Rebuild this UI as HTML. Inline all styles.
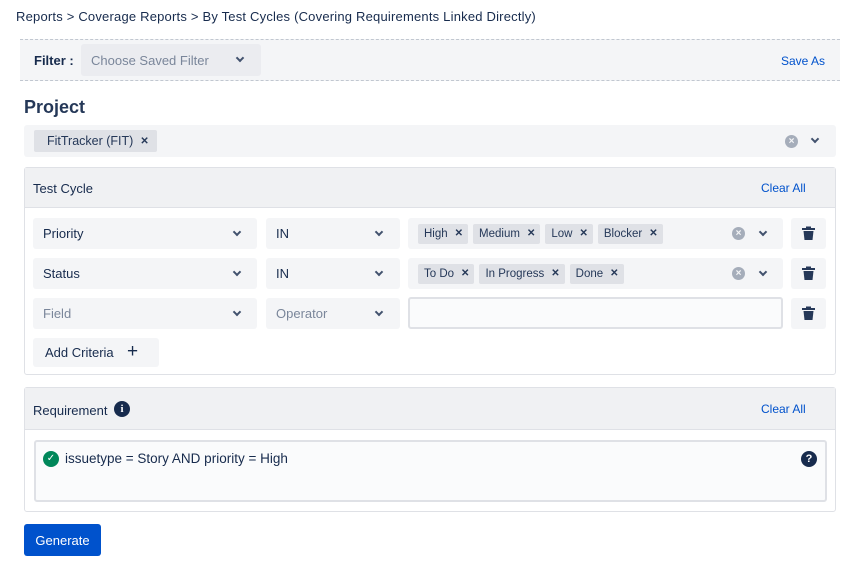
<!DOCTYPE html><html><head><style>
*{box-sizing:border-box;margin:0;padding:0}
body{width:843px;height:573px;background:#fff;font-family:"Liberation Sans",sans-serif;font-size:13px;color:#172b4d;position:relative;overflow:hidden}
.a{position:absolute}
.sel{position:absolute;background:#f4f5f7;border-radius:3px;display:flex;align-items:center}
.chev{position:absolute;width:6px;height:6px;border-right:2px solid #42526e;border-bottom:2px solid #42526e;transform:rotate(45deg)}
.tag{background:#dfe1e6;border-radius:2px;height:20px;padding:0 5px 0 6px;display:flex;align-items:center;font-size:11.5px;color:#253858;margin-right:5px}
.tag b{margin-left:7px;font-size:10px}
.clr{position:absolute;width:13px;height:13px;border-radius:50%;background:#a5adba;color:#f4f5f7;font-size:10px;line-height:13px;text-align:center;font-weight:bold}
.trash{position:absolute;width:35px;height:31px;background:#f4f5f7;border-radius:3px}
.link{position:absolute;color:#0052cc;font-size:12px}
</style></head><body>
<div class="a" style="left:16px;top:9px;font-size:13px;letter-spacing:0.2px">Reports &gt; Coverage Reports &gt; By Test Cycles (Covering Requirements Linked Directly)</div>
<div class="a" style="left:20px;top:39px;width:820px;height:42px;background:#f4f5f7;border-top:1px dashed #c1c7d0;border-bottom:1px dashed #c1c7d0"></div>
<div class="a" style="left:34px;top:53px;font-weight:bold;font-size:13px">Filter :</div>
<div class="sel" style="left:81px;top:44px;width:180px;height:32px;background:#ebecf0;color:#7a869a;padding-left:10px">Choose Saved Filter<div class="chev" style="left:156px;top:11px"></div></div>
<div class="link" style="left:781px;top:54px">Save As</div>
<div class="a" style="left:24px;top:97px;font-size:18px;font-weight:bold;color:#253858">Project</div>
<div class="sel" style="left:24px;top:125px;width:812px;height:32px;padding-left:10px"><div class="tag" style="height:22px;font-size:12.5px;padding:0 8px 0 13px">FitTracker (FIT)<b>✕</b></div><div class="clr" style="left:761px;top:10px">×</div><div class="chev" style="left:788px;top:11px"></div></div>
<div class="a" style="left:24px;top:167px;width:812px;height:208px;border:1px solid #dfe1e6;border-radius:3px"></div>
<div class="a" style="left:25px;top:168px;width:810px;height:40px;background:#f0f1f3;border-bottom:1px solid #dfe1e6"></div>
<div class="a" style="left:33px;top:181px">Test Cycle</div>
<div class="link" style="left:761px;top:181px">Clear All</div>

<div class="sel" style="left:33px;top:218px;width:224px;height:31px;padding-left:10px">Priority<div class="chev" style="left:201px;top:11px"></div></div>
<div class="sel" style="left:266px;top:218px;width:134px;height:31px;padding-left:10px">IN<div class="chev" style="left:110px;top:11px"></div></div>
<div class="sel" style="left:408px;top:218px;width:375px;height:31px;padding-left:10px"><div class="tag">High<b>✕</b></div><div class="tag">Medium<b>✕</b></div><div class="tag">Low<b>✕</b></div><div class="tag">Blocker<b>✕</b></div><div class="clr" style="left:324px;top:9px">×</div><div class="chev" style="left:352px;top:11px"></div></div>
<div class="trash" style="left:791px;top:218px"></div>

<div class="sel" style="left:33px;top:258px;width:224px;height:31px;padding-left:10px">Status<div class="chev" style="left:201px;top:11px"></div></div>
<div class="sel" style="left:266px;top:258px;width:134px;height:31px;padding-left:10px">IN<div class="chev" style="left:110px;top:11px"></div></div>
<div class="sel" style="left:408px;top:258px;width:375px;height:31px;padding-left:10px"><div class="tag">To Do<b>✕</b></div><div class="tag">In Progress<b>✕</b></div><div class="tag">Done<b>✕</b></div><div class="clr" style="left:324px;top:9px">×</div><div class="chev" style="left:352px;top:11px"></div></div>
<div class="trash" style="left:791px;top:258px"></div>

<div class="sel" style="left:33px;top:298px;width:224px;height:31px;padding-left:10px;color:#7a869a">Field<div class="chev" style="left:201px;top:11px"></div></div>
<div class="sel" style="left:266px;top:298px;width:134px;height:31px;padding-left:10px;color:#7a869a">Operator<div class="chev" style="left:110px;top:11px"></div></div>
<div class="a" style="left:408px;top:297px;width:375px;height:32px;background:#fafbfc;border:2px solid #dfe1e6;border-radius:3px"></div>
<div class="trash" style="left:791px;top:298px"></div>

<svg class="a" style="left:0;top:0" width="843" height="573">
<g fill="#253858"><g id="t"><rect x="802" y="228" width="13" height="2"/><rect x="806" y="226.5" width="5" height="2"/><path d="M803.5 231h10l-1 9h-8z"/></g>
<use href="#t" y="40"/><use href="#t" y="80"/></g>
</svg>

<div class="sel" style="left:33px;top:338px;width:126px;height:29px;padding-left:12px">Add Criteria<span style="position:absolute;left:94px;top:3px;font-size:19px">+</span></div>

<div class="a" style="left:24px;top:387px;width:812px;height:125px;border:1px solid #dfe1e6;border-radius:3px"></div>
<div class="a" style="left:25px;top:388px;width:810px;height:42px;background:#f0f1f3;border-bottom:1px solid #dfe1e6"></div>
<div class="a" style="left:33px;top:403px">Requirement</div>
<div class="a" style="left:114px;top:401px;width:16px;height:16px;border-radius:50%;background:#172b4d;color:#fff;font-size:11px;font-weight:bold;text-align:center;line-height:16px;font-family:'Liberation Serif',serif">i</div>
<div class="link" style="left:761px;top:402px">Clear All</div>
<div class="a" style="left:34px;top:440px;width:793px;height:62px;background:#fafbfc;border:2px solid #dfe1e6;border-radius:3px"></div>
<div class="a" style="left:43px;top:451px;width:16px;height:16px;border-radius:50%;background:#00875a;color:#fff;font-size:10px;text-align:center;line-height:16px">✓</div>
<div class="a" style="left:65px;top:451px;font-size:13.5px">issuetype = Story AND priority = High</div>
<div class="a" style="left:801px;top:451px;width:16px;height:16px;border-radius:50%;background:#172b4d;color:#fff;font-size:11px;font-weight:bold;text-align:center;line-height:16px">?</div>
<div class="a" style="left:24px;top:524px;width:77px;height:32px;background:#0052cc;border-radius:3px;color:#fff;text-align:center;line-height:34px;font-size:13px">Generate</div>
</body></html>
